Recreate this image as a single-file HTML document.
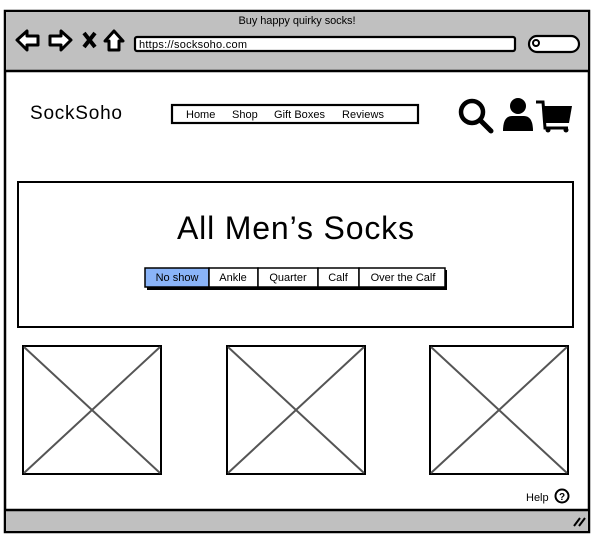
<!DOCTYPE html>
<html><head><meta charset="utf-8"><style>
html,body{margin:0;padding:0;background:#fff;width:596px;height:539px;overflow:hidden}
svg{display:block}
text{font-family:"Liberation Sans",sans-serif;fill:#000}
</style></head><body>
<svg width="596" height="539" viewBox="0 0 596 539">
<rect x="0" y="0" width="596" height="539" fill="#fff"/>
<rect x="5" y="11" width="584" height="521" fill="#fff" stroke="#000" stroke-width="2.5"/>
<rect x="6" y="12" width="582" height="58" fill="#c0c0c0"/>
<line x1="5" y1="71" x2="589" y2="71" stroke="#000" stroke-width="2.5"/>
<rect x="6" y="511" width="582" height="20" fill="#c0c0c0"/>
<line x1="5" y1="510" x2="589" y2="510" stroke="#000" stroke-width="2.5"/>
<text x="297" y="24" font-size="11" text-anchor="middle" textLength="117">Buy happy quirky socks!</text>
<path d="M17 40 L27 31 L27 36 L38 36 L38 45 L27 45 L27 50 Z" fill="#fff" stroke="#000" stroke-width="3" stroke-linejoin="round"/>
<path d="M71 40 L61 31 L61 36 L50 36 L50 45 L61 45 L61 50 Z" fill="#fff" stroke="#000" stroke-width="3" stroke-linejoin="round"/>
<path d="M84 33 L95 47 M95 33 L84 47" stroke="#000" stroke-width="4"/>
<path d="M105 41 L114 31 L123 41 L119 41 L119 50 L109 50 L109 41 Z" fill="#fff" stroke="#000" stroke-width="3" stroke-linejoin="round"/>
<rect x="135" y="37" width="380" height="14" rx="2" fill="#fff" stroke="#000" stroke-width="2.2"/>
<text x="139" y="48" font-size="11" textLength="108">https://socksoho.com</text>
<rect x="529" y="36" width="50" height="16" rx="8" fill="#fff" stroke="#000" stroke-width="2.2"/>
<circle cx="536" cy="43" r="3" fill="none" stroke="#000" stroke-width="2"/>
<text x="30" y="119" font-size="19" textLength="92">SockSoho</text>
<rect x="172" y="105" width="246" height="18" fill="#fff" stroke="#000" stroke-width="2.2"/>
<text x="186" y="118" font-size="11">Home</text>
<text x="232" y="118" font-size="11">Shop</text>
<text x="274" y="118" font-size="11" textLength="51">Gift Boxes</text>
<text x="342" y="118" font-size="11" textLength="42">Reviews</text>
<circle cx="472" cy="112" r="11" fill="none" stroke="#000" stroke-width="4.5"/>
<line x1="480" y1="120" x2="491" y2="131" stroke="#000" stroke-width="5" stroke-linecap="round"/>
<circle cx="518" cy="106" r="8" fill="#000"/>
<path d="M503 131 Q503 116 512 116 L524 116 Q533 116 533 131 Z" fill="#000"/>
<path d="M536 102 L543 102 L545 128 L568 128" fill="none" stroke="#000" stroke-width="3"/>
<path d="M543 106 L572 106 L569 123 L545 123 Z" fill="#000"/>
<circle cx="548" cy="130" r="2.5" fill="#000"/><circle cx="566" cy="130" r="2.5" fill="#000"/>
<rect x="18" y="182" width="555" height="145" fill="#fff" stroke="#000" stroke-width="2"/>
<text x="177" y="239" font-size="32" textLength="237">All Men’s Socks</text>
<rect x="147" y="270" width="300" height="20" fill="#000"/>
<rect x="145" y="268" width="64" height="19" fill="#8ab4f8" stroke="#000" stroke-width="1.5"/>
<rect x="209" y="268" width="49" height="19" fill="#fff" stroke="#000" stroke-width="1.5"/>
<rect x="258" y="268" width="60" height="19" fill="#fff" stroke="#000" stroke-width="1.5"/>
<rect x="318" y="268" width="41" height="19" fill="#fff" stroke="#000" stroke-width="1.5"/>
<rect x="359" y="268" width="86" height="19" fill="#fff" stroke="#000" stroke-width="1.5"/>
<g font-size="11" text-anchor="middle">
<text x="177" y="281">No show</text><text x="233" y="281">Ankle</text><text x="288" y="281">Quarter</text><text x="338" y="281">Calf</text><text x="403" y="281">Over the Calf</text>
</g>
<g fill="#fff" stroke="#000" stroke-width="2">
<rect x="23" y="346" width="138" height="128"/>
<rect x="227" y="346" width="138" height="128"/>
<rect x="430" y="346" width="138" height="128"/>
</g>
<g stroke="#555" stroke-width="2">
<path d="M24 347 L160 473 M160 347 L24 473"/>
<path d="M228 347 L364 473 M364 347 L228 473"/>
<path d="M431 347 L567 473 M567 347 L431 473"/>
</g>
<text x="526" y="501" font-size="11">Help</text>
<circle cx="562" cy="496" r="6.5" fill="none" stroke="#000" stroke-width="2"/>
<text x="562" y="500" font-size="10" font-weight="bold" text-anchor="middle">?</text>
<path d="M574 526 L580 518 M579 526 L585 518" stroke="#000" stroke-width="2"/>
</svg>
</body></html>
